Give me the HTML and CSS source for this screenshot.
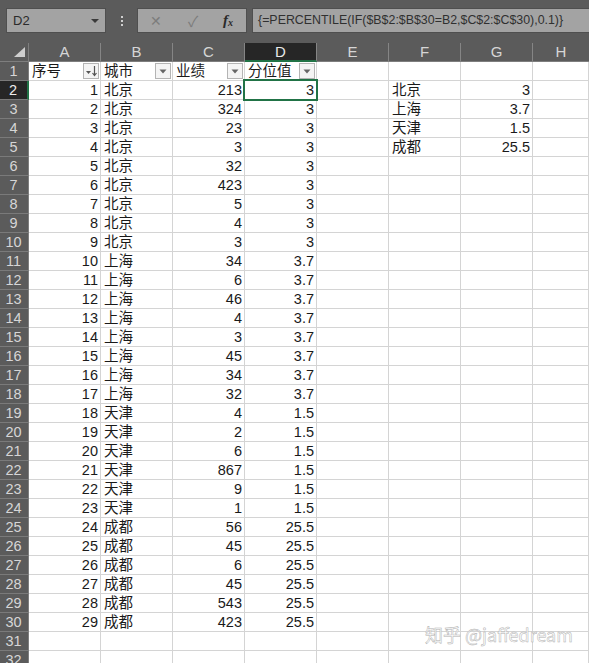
FILE: index.html
```html
<!DOCTYPE html>
<html>
<head>
<meta charset="utf-8">
<link rel="stylesheet" href="styles.css">
</head>
<body>
<div class="app">
  <div class="topbar">
    <div class="namebox"><span>D2</span><span class="nb-arrow"></span></div>
    <div class="dots"><i></i><i></i><i></i></div>
    <div class="btns">
      <span class="btn x">✕</span>
      <span class="btn ok">✓</span>
      <span class="btn fx">f<sub>x</sub></span>
    </div>
    <div class="formula">{=PERCENTILE(IF($B$2:$B$30=B2,$C$2:$C$30),0.1)}</div>
  </div>
  <div class="sheet">
    <div class="corner"><span class="tri"></span></div>
    <div class="ch">A</div><div class="ch">B</div><div class="ch">C</div><div class="ch sel">D</div><div class="ch">E</div><div class="ch">F</div><div class="ch">G</div><div class="ch last">H</div>

    <div class="rh">1</div>
    <div class="c t hd">序号<span class="fb"><svg width="14" height="14" viewBox="0 0 14 14"><path d="M2 7h5l-2.5 3z" fill="#555"/><path d="M10.5 2v9M8.5 9l2 2.5 2-2.5" stroke="#555" fill="none" stroke-width="1.2"/></svg></span></div>
    <div class="c t hd">城市<span class="fb"><svg width="14" height="14" viewBox="0 0 14 14"><path d="M3.5 5.5h7l-3.5 4z" fill="#666"/></svg></span></div>
    <div class="c t hd">业绩<span class="fb"><svg width="14" height="14" viewBox="0 0 14 14"><path d="M3.5 5.5h7l-3.5 4z" fill="#666"/></svg></span></div>
    <div class="c t hd">分位值<span class="fb"><svg width="14" height="14" viewBox="0 0 14 14"><path d="M3.5 5.5h7l-3.5 4z" fill="#666"/></svg></span></div>
    <div class="c"></div><div class="c"></div><div class="c"></div><div class="c"></div>

    <div class="rh sel">2</div><div class="c n">1</div><div class="c t">北京</div><div class="c n">213</div><div class="c n active">3</div><div class="c"></div><div class="c t">北京</div><div class="c n">3</div><div class="c"></div>
    <div class="rh">3</div><div class="c n">2</div><div class="c t">北京</div><div class="c n">324</div><div class="c n">3</div><div class="c"></div><div class="c t">上海</div><div class="c n">3.7</div><div class="c"></div>
    <div class="rh">4</div><div class="c n">3</div><div class="c t">北京</div><div class="c n">23</div><div class="c n">3</div><div class="c"></div><div class="c t">天津</div><div class="c n">1.5</div><div class="c"></div>
    <div class="rh">5</div><div class="c n">4</div><div class="c t">北京</div><div class="c n">3</div><div class="c n">3</div><div class="c"></div><div class="c t">成都</div><div class="c n">25.5</div><div class="c"></div>
    <div class="rh">6</div><div class="c n">5</div><div class="c t">北京</div><div class="c n">32</div><div class="c n">3</div><div class="c"></div><div class="c"></div><div class="c"></div><div class="c"></div>
    <div class="rh">7</div><div class="c n">6</div><div class="c t">北京</div><div class="c n">423</div><div class="c n">3</div><div class="c"></div><div class="c"></div><div class="c"></div><div class="c"></div>
    <div class="rh">8</div><div class="c n">7</div><div class="c t">北京</div><div class="c n">5</div><div class="c n">3</div><div class="c"></div><div class="c"></div><div class="c"></div><div class="c"></div>
    <div class="rh">9</div><div class="c n">8</div><div class="c t">北京</div><div class="c n">4</div><div class="c n">3</div><div class="c"></div><div class="c"></div><div class="c"></div><div class="c"></div>
    <div class="rh">10</div><div class="c n">9</div><div class="c t">北京</div><div class="c n">3</div><div class="c n">3</div><div class="c"></div><div class="c"></div><div class="c"></div><div class="c"></div>
    <div class="rh">11</div><div class="c n">10</div><div class="c t">上海</div><div class="c n">34</div><div class="c n">3.7</div><div class="c"></div><div class="c"></div><div class="c"></div><div class="c"></div>
    <div class="rh">12</div><div class="c n">11</div><div class="c t">上海</div><div class="c n">6</div><div class="c n">3.7</div><div class="c"></div><div class="c"></div><div class="c"></div><div class="c"></div>
    <div class="rh">13</div><div class="c n">12</div><div class="c t">上海</div><div class="c n">46</div><div class="c n">3.7</div><div class="c"></div><div class="c"></div><div class="c"></div><div class="c"></div>
    <div class="rh">14</div><div class="c n">13</div><div class="c t">上海</div><div class="c n">4</div><div class="c n">3.7</div><div class="c"></div><div class="c"></div><div class="c"></div><div class="c"></div>
    <div class="rh">15</div><div class="c n">14</div><div class="c t">上海</div><div class="c n">3</div><div class="c n">3.7</div><div class="c"></div><div class="c"></div><div class="c"></div><div class="c"></div>
    <div class="rh">16</div><div class="c n">15</div><div class="c t">上海</div><div class="c n">45</div><div class="c n">3.7</div><div class="c"></div><div class="c"></div><div class="c"></div><div class="c"></div>
    <div class="rh">17</div><div class="c n">16</div><div class="c t">上海</div><div class="c n">34</div><div class="c n">3.7</div><div class="c"></div><div class="c"></div><div class="c"></div><div class="c"></div>
    <div class="rh">18</div><div class="c n">17</div><div class="c t">上海</div><div class="c n">32</div><div class="c n">3.7</div><div class="c"></div><div class="c"></div><div class="c"></div><div class="c"></div>
    <div class="rh">19</div><div class="c n">18</div><div class="c t">天津</div><div class="c n">4</div><div class="c n">1.5</div><div class="c"></div><div class="c"></div><div class="c"></div><div class="c"></div>
    <div class="rh">20</div><div class="c n">19</div><div class="c t">天津</div><div class="c n">2</div><div class="c n">1.5</div><div class="c"></div><div class="c"></div><div class="c"></div><div class="c"></div>
    <div class="rh">21</div><div class="c n">20</div><div class="c t">天津</div><div class="c n">6</div><div class="c n">1.5</div><div class="c"></div><div class="c"></div><div class="c"></div><div class="c"></div>
    <div class="rh">22</div><div class="c n">21</div><div class="c t">天津</div><div class="c n">867</div><div class="c n">1.5</div><div class="c"></div><div class="c"></div><div class="c"></div><div class="c"></div>
    <div class="rh">23</div><div class="c n">22</div><div class="c t">天津</div><div class="c n">9</div><div class="c n">1.5</div><div class="c"></div><div class="c"></div><div class="c"></div><div class="c"></div>
    <div class="rh">24</div><div class="c n">23</div><div class="c t">天津</div><div class="c n">1</div><div class="c n">1.5</div><div class="c"></div><div class="c"></div><div class="c"></div><div class="c"></div>
    <div class="rh">25</div><div class="c n">24</div><div class="c t">成都</div><div class="c n">56</div><div class="c n">25.5</div><div class="c"></div><div class="c"></div><div class="c"></div><div class="c"></div>
    <div class="rh">26</div><div class="c n">25</div><div class="c t">成都</div><div class="c n">45</div><div class="c n">25.5</div><div class="c"></div><div class="c"></div><div class="c"></div><div class="c"></div>
    <div class="rh">27</div><div class="c n">26</div><div class="c t">成都</div><div class="c n">6</div><div class="c n">25.5</div><div class="c"></div><div class="c"></div><div class="c"></div><div class="c"></div>
    <div class="rh">28</div><div class="c n">27</div><div class="c t">成都</div><div class="c n">45</div><div class="c n">25.5</div><div class="c"></div><div class="c"></div><div class="c"></div><div class="c"></div>
    <div class="rh">29</div><div class="c n">28</div><div class="c t">成都</div><div class="c n">543</div><div class="c n">25.5</div><div class="c"></div><div class="c"></div><div class="c"></div><div class="c"></div>
    <div class="rh">30</div><div class="c n">29</div><div class="c t">成都</div><div class="c n">423</div><div class="c n">25.5</div><div class="c"></div><div class="c"></div><div class="c"></div><div class="c"></div>
    <div class="rh">31</div><div class="c"></div><div class="c"></div><div class="c"></div><div class="c"></div><div class="c"></div><div class="c"></div><div class="c"></div><div class="c"></div>
    <div class="rh">32</div><div class="c"></div><div class="c"></div><div class="c"></div><div class="c"></div><div class="c"></div><div class="c"></div><div class="c"></div><div class="c"></div>
  </div>
  <div class="watermark">知乎 @jaffedream</div>
</div>
</body>
</html>
```

FILE: styles.css
```css
* { box-sizing: border-box; }
html, body { margin: 0; padding: 0; }
body {
  width: 589px;
  height: 663px;
  overflow: hidden;
  background: #ffffff;
  font-family: "Liberation Sans", "Noto Sans CJK SC", sans-serif;
}
.app { position: relative; width: 589px; height: 663px; overflow: hidden; }

.topbar {
  height: 43px;
  background: #5b5b5b;
  display: flex;
  align-items: flex-start;
  padding: 8px 0 0 6px;
}
.namebox {
  width: 100px;
  height: 25px;
  background: #a3a3a3;
  border: 1px solid #4f4f4f;
  display: flex;
  align-items: center;
  justify-content: space-between;
  padding: 0 6px 0 6px;
  font-size: 13px;
  color: #2b2b2b;
}
.nb-arrow {
  width: 0; height: 0;
  border-left: 4px solid transparent;
  border-right: 4px solid transparent;
  border-top: 4px solid #3a3a3a;
}
.dots {
  width: 31px;
  height: 25px;
  display: flex;
  flex-direction: column;
  align-items: center;
  justify-content: center;
  gap: 2px;
}
.dots i { display: block; width: 2px; height: 2px; background: #d0d0d0; }
.btns {
  width: 110px;
  height: 25px;
  background: #a3a3a3;
  border: 1px solid #4f4f4f;
  display: flex;
  align-items: center;
  padding: 0 0 0 12px;
}
.btn { display: inline-block; text-align: center; }
.btn.x { width: 12px; color: #7c7c7c; font-size: 14px; margin-right: 24px; }
.btn.ok { width: 14px; color: #7c7c7c; font-size: 15px; margin-right: 23px; }
.btn.fx {
  font-family: "Liberation Serif", serif;
  font-style: italic;
  font-weight: bold;
  font-size: 15px;
  color: #2a2a2a;
}
.btn.fx sub { font-size: 10px; vertical-align: -1px; }
.formula {
  margin-left: 5px;
  flex: 1;
  height: 25px;
  background: #a3a3a3;
  border: 1px solid #4f4f4f;
  border-right: none;
  padding: 0 0 0 5px;
  font-size: 12.4px;
  line-height: 23px;
  color: #303030;
  white-space: nowrap;
  overflow: hidden;
}

.sheet {
  display: grid;
  grid-template-columns: 29px repeat(7, 72px) 1fr;
  grid-auto-rows: 19px;
}
.corner {
  position: relative;
  background: #5b5b5b;
  border-right: 1px solid #7e7e7e;
  border-bottom: 1px solid #7e7e7e;
}
.tri {
  position: absolute;
  right: 3px;
  bottom: 4px;
  width: 0; height: 0;
  border-left: 11px solid transparent;
  border-bottom: 10px solid #cfcfcf;
}
.ch {
  background: #5b5b5b;
  color: #d6d6d6;
  border-right: 1px solid #858585;
  border-bottom: 1px solid #7e7e7e;
  text-align: center;
  font-size: 15px;
  line-height: 18px;
}
.ch.last { border-right: none; }
.ch.sel {
  background: #262626;
  color: #e8e8e8;
  border-bottom: 2px solid #217346;
  line-height: 17px;
}
.rh {
  background: #5b5b5b;
  color: #d6d6d6;
  border-right: 1px solid #7e7e7e;
  border-bottom: 1px solid #7a7a7a;
  text-align: center;
  font-size: 14.5px;
  line-height: 18px;
  padding-right: 1px;
}
.rh.sel {
  background: #262626;
  color: #ececec;
  border-right: 2px solid #217346;
}
.c {
  border-right: 1px solid #d4d4d4;
  border-bottom: 1px solid #d4d4d4;
  font-size: 14.5px;
  line-height: 18px;
  color: #1a1a1a;
  white-space: nowrap;
  overflow: hidden;
}
.n { text-align: right; padding-right: 2px; }
.t { text-align: left; padding-left: 3px; }
.hd {
  display: flex;
  justify-content: space-between;
  align-items: center;
  padding-right: 1px;
  overflow: visible;
}
.fb {
  width: 16px;
  height: 16px;
  background: #f4f4f4;
  border: 1px solid #b4b4b4;
  display: flex;
  align-items: center;
  justify-content: center;
}
.active {
  position: relative;
  overflow: visible;
}
.active::after {
  content: "";
  position: absolute;
  left: -2px;
  top: -2px;
  right: -2px;
  bottom: -2px;
  border: 2px solid #217346;
}
.watermark {
  position: absolute;
  left: 425px;
  top: 621px;
  font-family: "Noto Sans CJK SC", sans-serif;
  font-size: 18px;
  color: rgba(255, 255, 255, 0.9);
  -webkit-text-stroke: 0.5px #b0b0b0;
  white-space: nowrap;
}
```
